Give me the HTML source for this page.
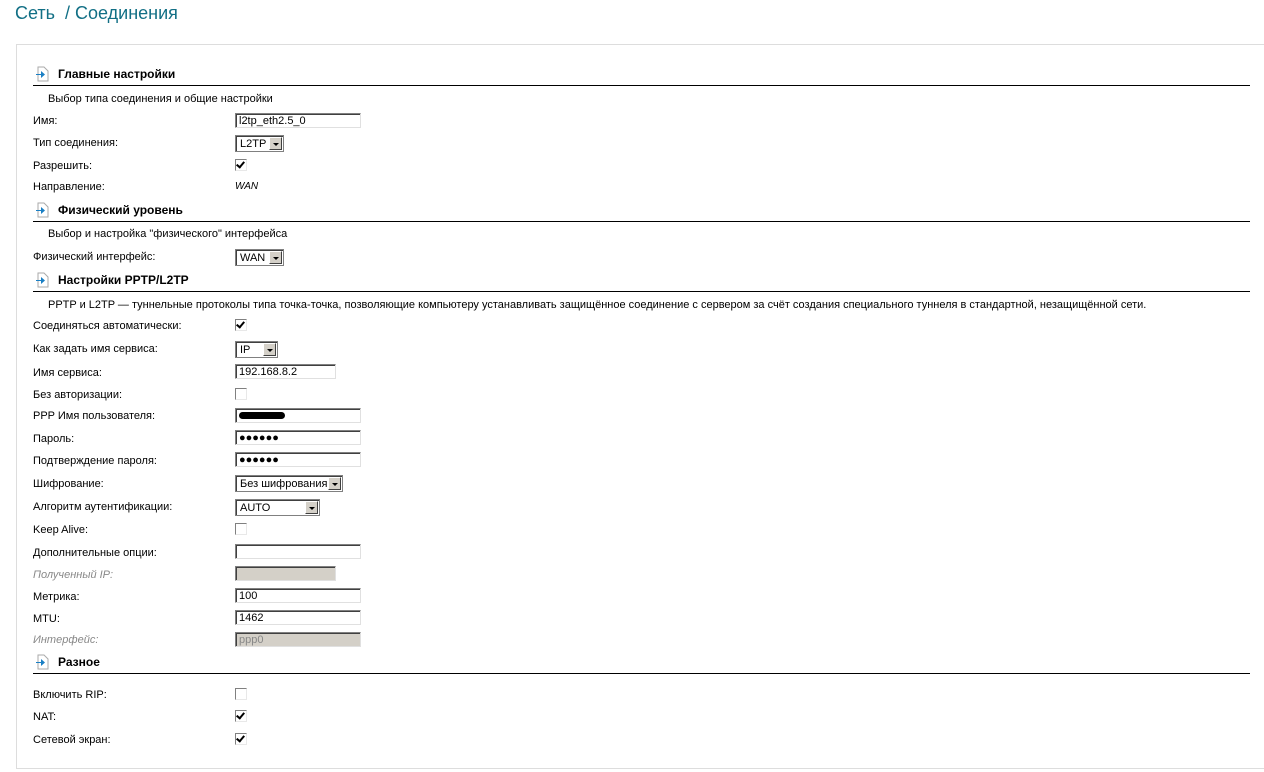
<!DOCTYPE html>
<html><head><meta charset="utf-8"><style>
body{margin:0;width:1264px;height:772px;background:#fff;position:relative;overflow:hidden;font-family:"Liberation Sans",sans-serif;font-size:11px;color:#000}
.a{position:absolute;white-space:nowrap}
.t{position:absolute;left:15px;top:3px;font-size:18px;color:#116f85}
.panel{position:absolute;left:16px;top:44px;width:1260px;height:723px;border:1px solid #ddd;border-right:none}
.h{position:absolute;left:33px;width:1217px;height:23px;border-bottom:1px solid #000}
.h span{position:absolute;left:25px;top:5px;font-weight:bold;font-size:12px}
.h svg{position:absolute;left:2px;top:4px}
.l{position:absolute;left:33px;line-height:14px;margin-top:1px}
.d{position:absolute;left:48px;line-height:14px;margin-top:1px}
.gi{color:#888;font-style:italic}
.in{position:absolute;left:235px;width:121px;height:13px;border:1px solid;border-color:#808080 #e0e0e0 #e0e0e0 #808080;box-shadow:inset 1px 1px 0 #404040;padding-left:3px;line-height:15px;font-size:11px}
.dis{background:#d4d0c8;color:#888}
.sel{position:absolute;left:235px;height:15px;border:1px solid #808080;box-shadow:inset 1px 1px 0 #404040;background:#fff;line-height:16px;padding-left:4px}
.sel b{position:absolute;right:1px;top:1px;width:13px;height:13px;background:#d4d0c8;border:1px solid;border-color:#fff #404040 #404040 #fff;box-sizing:border-box}
.sel b:after{content:"";position:absolute;left:3px;top:5px;border:3px solid transparent;border-top:3px solid #000;border-bottom:none}
.cb{position:absolute;left:235px;width:10px;height:10px;border:1px solid;border-color:#808080 #e8e8e8 #e8e8e8 #808080;background:#fff}
.cb.on:after{content:"";position:absolute;left:2px;top:0px;width:3px;height:6px;border:solid #000;border-width:0 2px 2px 0;transform:rotate(40deg)}
</style></head><body>
<div class="t">Сеть &nbsp;/ Соединения</div>
<div class="panel"></div>

<div class="h" style="top:62px"><svg width="14" height="16"><path d="M3 1h6l4 4v10H3z" fill="#fff" stroke="#aaa"/><path d="M1 8h5V5l4 3.5L6 12V9H1z" fill="#1a7fc4"/></svg><span>Главные настройки</span></div>
<div class="d" style="top:91px">Выбор типа соединения и общие настройки</div>
<div class="l" style="top:113px">Имя:</div><div class="in" style="top:113px">l2tp_eth2.5_0</div>
<div class="l" style="top:135px">Тип соединения:</div><div class="sel" style="top:135px;width:43px">L2TP<b></b></div>
<div class="l" style="top:158px">Разрешить:</div><div class="cb on" style="top:159px"></div>
<div class="l" style="top:179px">Направление:</div><div class="a" style="left:235px;top:181px;font-style:italic;font-size:10px">WAN</div>

<div class="h" style="top:198px"><svg width="14" height="16"><path d="M3 1h6l4 4v10H3z" fill="#fff" stroke="#aaa"/><path d="M1 8h5V5l4 3.5L6 12V9H1z" fill="#1a7fc4"/></svg><span>Физический уровень</span></div>
<div class="d" style="top:226px">Выбор и настройка "физического" интерфейса</div>
<div class="l" style="top:249px">Физический интерфейс:</div><div class="sel" style="top:249px;width:43px">WAN<b></b></div>

<div class="h" style="top:268px"><svg width="14" height="16"><path d="M3 1h6l4 4v10H3z" fill="#fff" stroke="#aaa"/><path d="M1 8h5V5l4 3.5L6 12V9H1z" fill="#1a7fc4"/></svg><span>Настройки PPTP/L2TP</span></div>
<div class="d" style="top:297px">PPTP и L2TP — туннельные протоколы типа точка-точка, позволяющие компьютеру устанавливать защищённое соединение с сервером за счёт создания специального туннеля в стандартной, незащищённой сети.</div>
<div class="l" style="top:318px">Соединяться автоматически:</div><div class="cb on" style="top:319px"></div>
<div class="l" style="top:341px">Как задать имя сервиса:</div><div class="sel" style="top:341px;width:37px">IP<b></b></div>
<div class="l" style="top:365px">Имя сервиса:</div><div class="in" style="top:364px;width:96px">192.168.8.2</div>
<div class="l" style="top:387px">Без авторизации:</div><div class="cb" style="top:388px"></div>
<div class="l" style="top:408px">PPP Имя пользователя:</div><div class="in" style="top:408px"><span style="display:inline-block;width:46px;height:7px;background:#000;border-radius:4px;margin-top:3px;vertical-align:top"></span></div>
<div class="l" style="top:431px">Пароль:</div><div class="in" style="top:430px">●●●●●●</div>
<div class="l" style="top:453px">Подтверждение пароля:</div><div class="in" style="top:452px">●●●●●●</div>
<div class="l" style="top:476px">Шифрование:</div><div class="sel" style="top:475px;width:102px">Без шифрования<b></b></div>
<div class="l" style="top:499px">Алгоритм аутентификации:</div><div class="sel" style="top:499px;width:79px">AUTO<b></b></div>
<div class="l" style="top:522px">Keep Alive:</div><div class="cb" style="top:523px"></div>
<div class="l" style="top:545px">Дополнительные опции:</div><div class="in" style="top:544px"></div>
<div class="l gi" style="top:567px">Полученный IP:</div><div class="in dis" style="top:566px;width:96px"></div>
<div class="l" style="top:589px">Метрика:</div><div class="in" style="top:588px">100</div>
<div class="l" style="top:611px">MTU:</div><div class="in" style="top:610px">1462</div>
<div class="l gi" style="top:632px">Интерфейс:</div><div class="in dis" style="top:632px">ppp0</div>

<div class="h" style="top:650px"><svg width="14" height="16"><path d="M3 1h6l4 4v10H3z" fill="#fff" stroke="#aaa"/><path d="M1 8h5V5l4 3.5L6 12V9H1z" fill="#1a7fc4"/></svg><span>Разное</span></div>
<div class="l" style="top:687px">Включить RIP:</div><div class="cb" style="top:688px"></div>
<div class="l" style="top:709px">NAT:</div><div class="cb on" style="top:710px"></div>
<div class="l" style="top:732px">Сетевой экран:</div><div class="cb on" style="top:733px"></div>
</body></html>
